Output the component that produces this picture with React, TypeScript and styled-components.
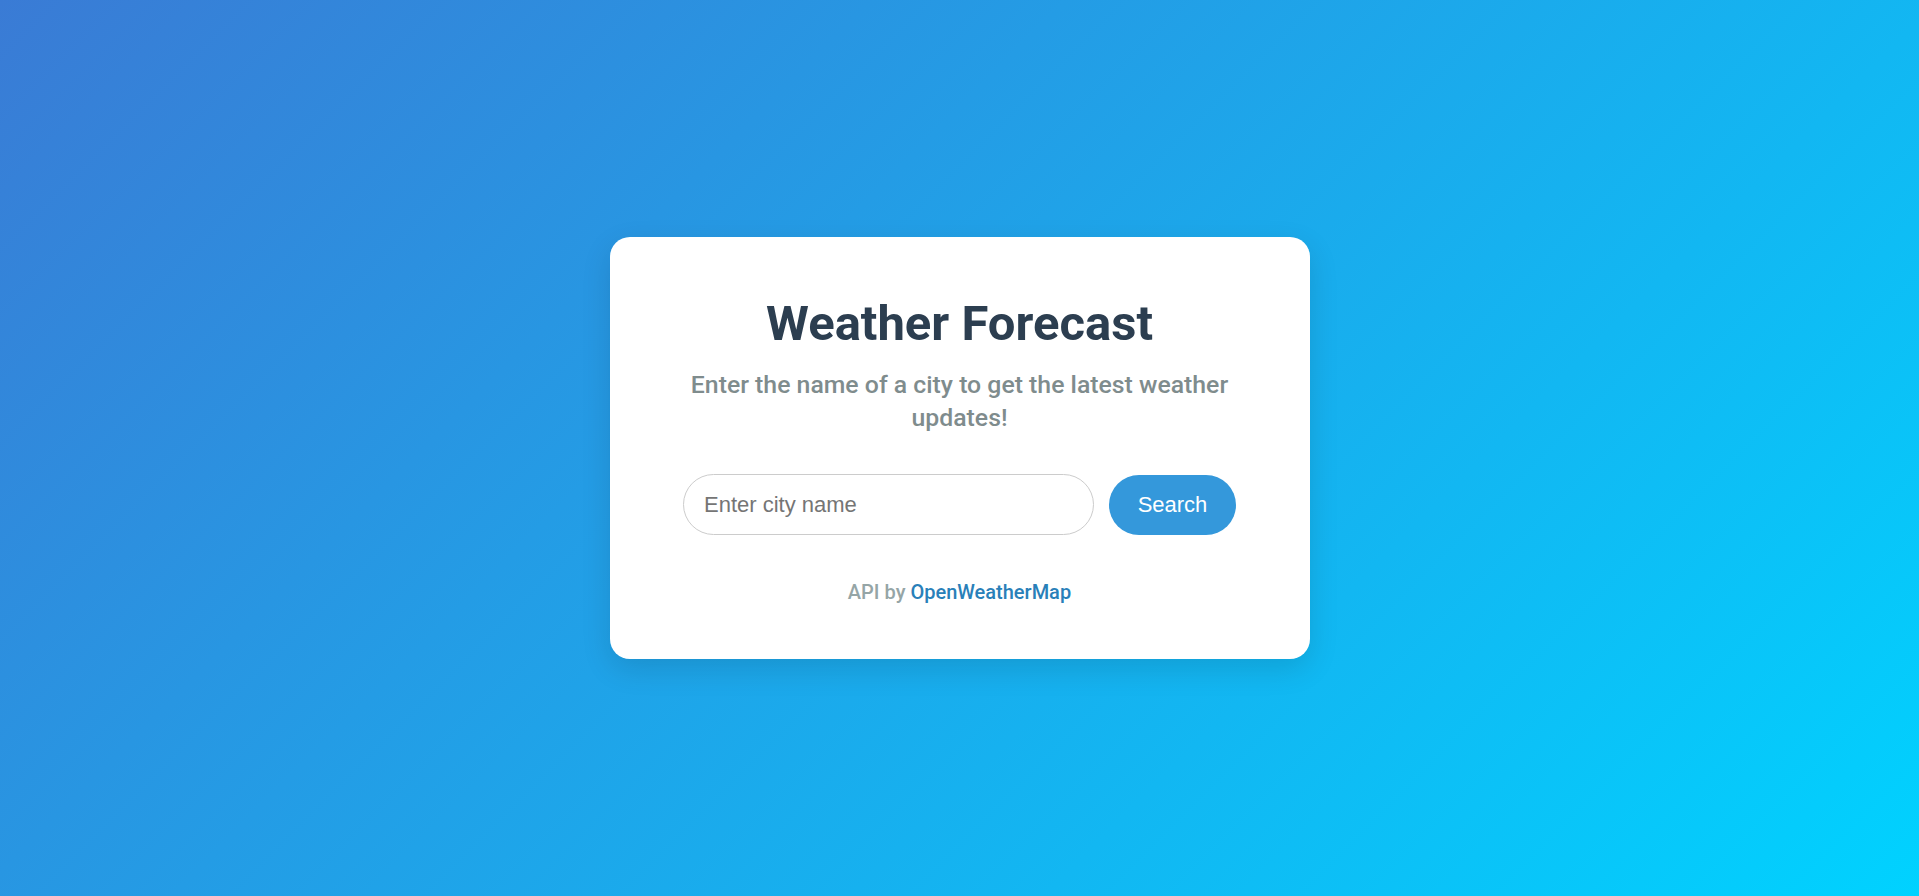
import React from "react";
import styled, { createGlobalStyle } from "styled-components";

const GlobalStyle = createGlobalStyle`
  html, body {
    margin: 0;
    padding: 0;
    height: 100%;
  }
  body {
    font-family: Roboto, "Liberation Sans", Arial, sans-serif;
  }
  #root {
    height: 100%;
  }
`;

const Page = styled.div`
  min-height: 100vh;
  display: flex;
  align-items: center;
  justify-content: center;
  background: linear-gradient(135deg, #3a7bd5 0%, #00d2ff 100%);
`;

const Card = styled.div`
  width: 700px;
  box-sizing: border-box;
  background: #ffffff;
  border-radius: 20px;
  box-shadow: 0 10px 30px rgba(0, 0, 0, 0.12);
  padding: 58px 40px 55px;
  display: flex;
  flex-direction: column;
  align-items: center;
  text-align: center;
`;

const Title = styled.h1`
  margin: 0;
  font-family: Roboto, "Liberation Sans", sans-serif;
  font-size: 49px;
  font-weight: 700;
  line-height: normal;
  color: #2c3e50;
`;

const Subtitle = styled.p`
  margin: 16px 0 0;
  max-width: 580px;
  font-family: Roboto, "Liberation Sans", sans-serif;
  font-size: 24.8px;
  font-weight: 500;
  line-height: 33px;
  color: #7f8c8d;
`;

const SearchForm = styled.form`
  margin-top: 40px;
  display: flex;
  align-items: center;
  gap: 15px;
`;

const CityInput = styled.input`
  width: 411px;
  height: 61px;
  box-sizing: border-box;
  padding: 0 20px;
  border: 1px solid #cccccc;
  border-radius: 31px;
  font-family: "Liberation Sans", Arial, sans-serif;
  font-size: 22px;
  color: #333333;
  outline: none;
  &::placeholder {
    color: #757575;
  }
`;

const SearchButton = styled.button`
  width: 127px;
  height: 60px;
  box-sizing: border-box;
  border: none;
  border-radius: 30px;
  background: #3498db;
  color: #ffffff;
  font-family: "Liberation Sans", Arial, sans-serif;
  font-size: 22px;
  cursor: pointer;
`;

const Footer = styled.p`
  margin: 45px 0 0;
  font-family: Roboto, "Liberation Sans", sans-serif;
  font-size: 20px;
  font-weight: 500;
  line-height: normal;
  color: #95a5a6;
`;

const FooterLink = styled.a`
  color: #2980b9;
  text-decoration: none;
`;

export default function App() {
  return (
    <>
      <GlobalStyle />
      <Page>
        <Card>
          <Title>Weather Forecast</Title>
          <Subtitle>
            Enter the name of a city to get the latest weather updates!
          </Subtitle>
          <SearchForm onSubmit={(e) => e.preventDefault()}>
            <CityInput type="text" placeholder="Enter city name" />
            <SearchButton type="submit">Search</SearchButton>
          </SearchForm>
          <Footer>
            API by <FooterLink href="#">OpenWeatherMap</FooterLink>
          </Footer>
        </Card>
      </Page>
    </>
  );
}
